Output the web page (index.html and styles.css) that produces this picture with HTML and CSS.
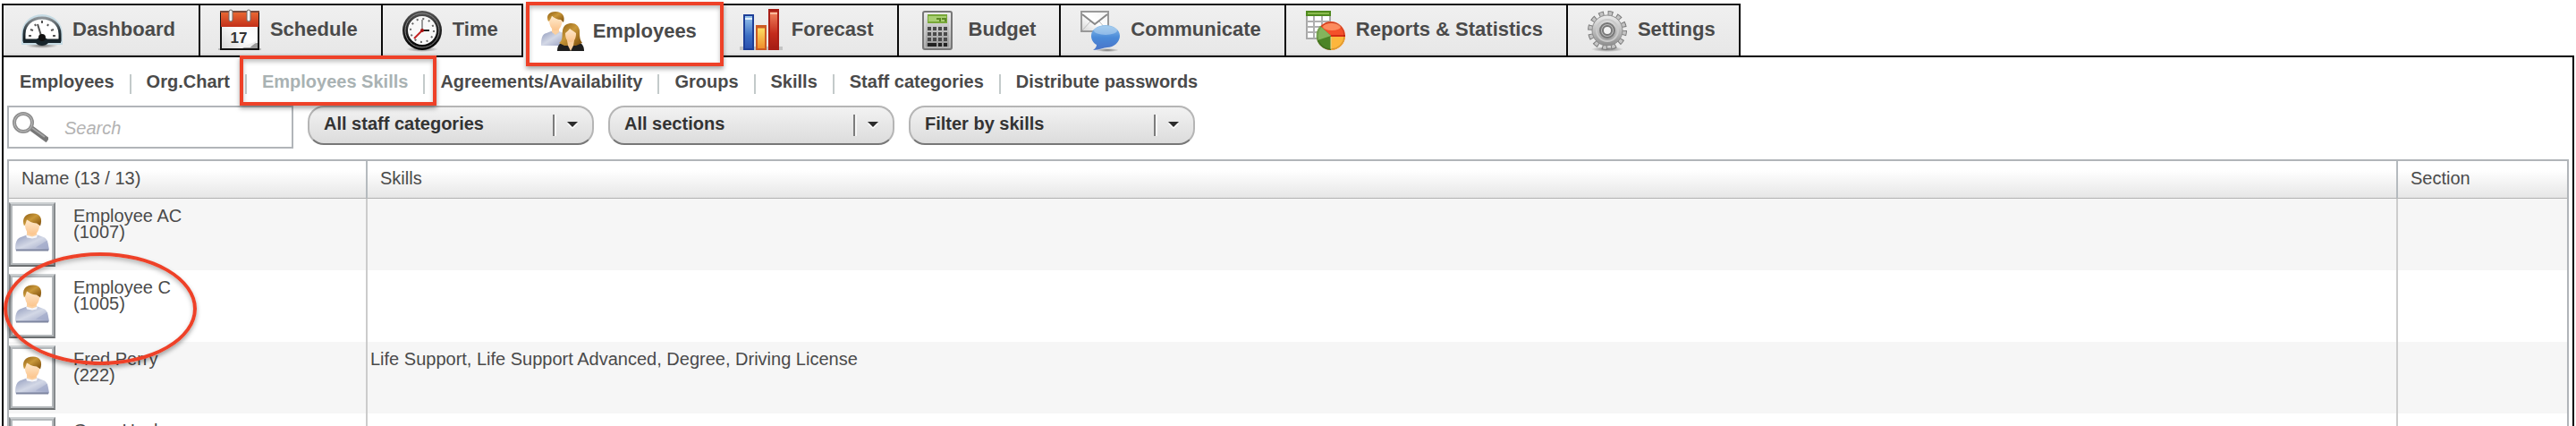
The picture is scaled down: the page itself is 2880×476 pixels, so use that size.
FILE: index.html
```
<!DOCTYPE html>
<html lang="en">
<head>
<meta charset="UTF-8">
<meta name="viewport" content="width=device-width, initial-scale=1.0">
<title>Employees Skills</title>
<link rel="stylesheet" href="styles.css">
</head>
<body>

<!-- shared gradients and the avatar -->
<svg class="defs" width="0" height="0" aria-hidden="true">
  <defs>
    <linearGradient id="gHair" x1="0" y1="0" x2="1" y2="1">
      <stop offset="0" stop-color="#8a5a10"/><stop offset=".45" stop-color="#c9983a"/><stop offset="1" stop-color="#7a4a08"/>
    </linearGradient>
    <linearGradient id="gSkin" x1="0" y1="0" x2="0" y2="1">
      <stop offset="0" stop-color="#ffe9cc"/><stop offset="1" stop-color="#fbc48c"/>
    </linearGradient>
    <linearGradient id="gShirt" x1="0" y1="0" x2="1" y2="1">
      <stop offset="0" stop-color="#8f99bb"/><stop offset=".5" stop-color="#d3d8e6"/><stop offset="1" stop-color="#9aa2c4"/>
    </linearGradient>
    <linearGradient id="gBlue" x1="0" y1="0" x2="0" y2="1">
      <stop offset="0" stop-color="#9cc9ee"/><stop offset=".6" stop-color="#3c6fc4"/><stop offset="1" stop-color="#2a4fae"/>
    </linearGradient>
    <linearGradient id="gBubble" x1="0" y1="0" x2="0" y2="1">
      <stop offset="0" stop-color="#8ec0ea"/><stop offset=".5" stop-color="#4a8ad8"/><stop offset="1" stop-color="#4a74c8"/>
    </linearGradient>
    <linearGradient id="gOrange" x1="0" y1="0" x2="0" y2="1">
      <stop offset="0" stop-color="#ffe768"/><stop offset="1" stop-color="#ee8a2a"/>
    </linearGradient>
    <linearGradient id="gRed" x1="0" y1="0" x2="0" y2="1">
      <stop offset="0" stop-color="#f58a62"/><stop offset=".6" stop-color="#c42c1c"/><stop offset="1" stop-color="#a41c14"/>
    </linearGradient>
    <linearGradient id="gCal" x1="0" y1="0" x2="0" y2="1">
      <stop offset="0" stop-color="#ea6a34"/><stop offset="1" stop-color="#c2301a"/>
    </linearGradient>
    <linearGradient id="gPaper" x1="0" y1="1" x2="1" y2="0">
      <stop offset="0" stop-color="#d4d4d4"/><stop offset=".5" stop-color="#fff"/><stop offset="1" stop-color="#f2f2f2"/>
    </linearGradient>
    <linearGradient id="gMetal" x1="0" y1="0" x2="0" y2="1">
      <stop offset="0" stop-color="#ededed"/><stop offset="1" stop-color="#8e8e8e"/>
    </linearGradient>
    <linearGradient id="gRim" x1="0" y1="0" x2="0" y2="1">
      <stop offset="0" stop-color="#8c9296"/><stop offset=".6" stop-color="#27343b"/><stop offset="1" stop-color="#10181c"/>
    </linearGradient>
    <linearGradient id="gClock" x1="0" y1="0" x2="0" y2="1">
      <stop offset="0" stop-color="#555"/><stop offset=".5" stop-color="#222"/><stop offset="1" stop-color="#000"/>
    </linearGradient>
    <radialGradient id="gShade">
      <stop offset="0" stop-color="#000" stop-opacity=".5"/><stop offset="1" stop-color="#000" stop-opacity="0"/>
    </radialGradient>
    <symbol id="person" viewBox="0 0 38 43">
      <path d="M0 41C0 34 1 29 5 27l8-3h12l8 3c3 2 4 7 5 14z" fill="url(#gShirt)"/>
      <path d="M1 41h36" stroke="#7e86a0" stroke-width="2"/>
      <path d="M23 38l13-8 1 9z" fill="#a3abca" opacity=".7"/>
      <path d="M13 19h11v5l-5 4-6-4z" fill="#fbd0a0"/>
      <path d="M12 24l7 2 6-2-1 3-5 1-6-1z" fill="#f6f7fb"/>
      <path d="M11 7h16c1 7 0 16-8 17-7-1-9-9-8-17z" fill="url(#gSkin)"/>
      <path d="M10 14C7 6 11 0 20 0c8 0 11 6 8 14-2-2-3-2-4-3-5 0-9-3-11-4-1 2-1 5-3 7z" fill="url(#gHair)"/>
    </symbol>
  </defs>
</svg>

<div class="app">
  <nav class="tabs">
    <a class="tab" href="#">
      <svg class="icon" viewBox="0 0 48 48" aria-hidden="true">
        <ellipse cx="24" cy="41" rx="18" ry="3" fill="url(#gShade)"/>
        <path d="M3 38V29C3 17 12 8 24 8s21 9 21 21v9z" fill="#fff" stroke="#c6dbe4" stroke-width="4"/>
        <path d="M4 35V28C4 17 13 10 24 10s20 7 20 18v7z" fill="#fff" stroke="url(#gRim)" stroke-width="3"/>
        <path d="M3 34h15c2-3 10-3 12 0h15v4H31c-3 4-11 4-14 0H3z" fill="#17242b"/>
        <path d="M9 30h3M36 30h3M11 23l3 1M34 24l3-1M16 17l1 2M31 17l-1 2M24 13v3" stroke="#555" stroke-width="2"/>
        <path d="M19 17l5 16" stroke="#555" stroke-width="2"/>
        <circle cx="24" cy="32" r="4" fill="#111"/>
      </svg>
      <span class="tab-label">Dashboard</span>
    </a>
    <a class="tab" href="#">
      <svg class="icon" viewBox="0 0 48 48" aria-hidden="true">
        <path d="M0 45h48" stroke="#bbb" stroke-width="2"/>
        <rect x="3" y="3" width="42" height="42" fill="url(#gPaper)" stroke="#111" stroke-width="2"/>
        <rect x="3" y="3" width="42" height="17" fill="url(#gCal)"/>
        <path d="M2 3h44" stroke="#7a4a3c" stroke-width="2"/>
        <path d="M27 44c5-3 10-6 17-6v6z" fill="#9a9a9a"/>
        <path d="M28 43c6-5 10-4 16-8-2 4-6 5-8 8z" fill="#eee"/>
        <rect x="12" y="1" width="4" height="13" rx="2" fill="#f4f4f4" stroke="#6c6c6c"/>
        <rect x="32" y="1" width="4" height="13" rx="2" fill="#f4f4f4" stroke="#6c6c6c"/>
        <text class="cal-day" x="23" y="38" text-anchor="middle">17</text>
      </svg>
      <span class="tab-label">Schedule</span>
    </a>
    <a class="tab" href="#">
      <svg class="icon" viewBox="0 0 48 48" aria-hidden="true">
        <ellipse cx="24" cy="45" rx="18" ry="3" fill="url(#gShade)"/>
        <circle cx="24" cy="24" r="22" fill="url(#gClock)"/>
        <circle cx="24" cy="24" r="19" fill="none" stroke="#8a8a8a"/>
        <circle cx="24" cy="24" r="16" fill="#f8f8f8"/>
        <circle cx="24" cy="24" r="13" fill="none" stroke="#666" stroke-width="2" stroke-dasharray="2 4.8"/>
        <path d="M24 12v12" stroke="#999" stroke-width="2"/>
        <path d="M24 24h8" stroke="#222" stroke-width="2"/>
        <path d="M24 24l-9 9" stroke="#c22222" stroke-width="2"/>
        <circle cx="24" cy="24" r="2" fill="#a11"/>
      </svg>
      <span class="tab-label">Time</span>
    </a>
    <a class="tab active" href="#" aria-current="page">
      <svg class="icon" viewBox="0 0 48 48" aria-hidden="true">
        <path d="M0 39c0-8 1-13 6-14l5-2h9l5 2v14z" fill="url(#gShirt)"/>
        <path d="M12 18h8v6l-4 3-4-3z" fill="#fbd0a0"/>
        <path d="M9 7h15c0 7-2 15-8 15-5 0-8-8-7-15z" fill="url(#gSkin)"/>
        <path d="M8 12C5 5 9 1 16 1c8 0 11 5 9 12l-3-3c-4 0-7-2-10-4-1 2-2 5-4 6z" fill="url(#gHair)"/>
        <path d="M18 45c0-5 2-9 6-9h18c4 0 6 4 6 9z" fill="#1e1e1e"/>
        <path d="M20 36c5-3 3-9 4-14 1-6 5-8 10-8s8 3 9 8c0 6 0 10 3 14l-7 3H26z" fill="url(#gHair)"/>
        <path d="M29 33h8l-1 6-3 6-3-6z" fill="#fbd0a0"/>
        <path d="M27 25c2-2 4-3 5-5 2 2 5 3 7 5 0 6-2 10-6 10s-6-4-6-10z" fill="url(#gSkin)"/>
      </svg>
      <span class="tab-label">Employees</span>
    </a>
    <a class="tab" href="#">
      <svg class="icon" viewBox="0 0 48 48" aria-hidden="true">
        <path d="M0 44h48" stroke="#c4c4c4" stroke-width="4"/>
        <rect x="5" y="7" width="10" height="38" fill="url(#gBlue)" stroke="#1e3f98" stroke-width="2"/>
        <path d="M4 7h12" stroke="#1e3f98" stroke-width="2"/>
        <path d="M6 11h8" stroke="#e2f0fb" stroke-width="2"/>
        <rect x="19" y="19" width="10" height="26" fill="url(#gOrange)" stroke="#cc5a22" stroke-width="2"/>
        <path d="M18 20h12" stroke="#cc5a22" stroke-width="3"/>
        <rect x="33" y="1" width="10" height="44" fill="url(#gRed)" stroke="#a81e16" stroke-width="2"/>
        <path d="M32 2h12" stroke="#a81e16" stroke-width="3"/>
        <path d="M34 5h8" stroke="#ffb89a" stroke-width="2"/>
      </svg>
      <span class="tab-label">Forecast</span>
    </a>
    <a class="tab" href="#">
      <svg class="icon" viewBox="0 0 48 48" aria-hidden="true">
        <rect x="7" y="3" width="32" height="42" rx="2" fill="url(#gMetal)" stroke="#777" stroke-width="2"/>
        <rect x="9" y="5" width="28" height="38" fill="none" stroke="#f4f4f4" opacity=".6"/>
        <rect x="12" y="6" width="22" height="10" fill="#78a838"/>
        <rect x="13" y="8" width="20" height="6" fill="#a9cf72"/>
        <path d="M22 11h4v3M28 11h4v3" stroke="#5c8826" stroke-width="2" fill="none"/>
        <path d="M12 22h22M12 28h22M12 34h22" stroke="#4a4a4a" stroke-width="4" stroke-dasharray="4 2"/>
        <path d="M12 40h10M24 40h4M30 40h4" stroke="#222" stroke-width="4"/>
      </svg>
      <span class="tab-label">Budget</span>
    </a>
    <a class="tab" href="#">
      <svg class="icon" viewBox="0 0 48 48" aria-hidden="true">
        <rect x="3" y="3" width="30" height="22" fill="url(#gPaper)" stroke="#999" stroke-width="2"/>
        <path d="M4 24l9-10M32 24l-9-10" stroke="#bbb"/>
        <path d="M4 6l14 11L32 6" fill="none" stroke="#888" stroke-width="2"/>
        <ellipse cx="32" cy="46" rx="13" ry="2" fill="url(#gShade)"/>
        <path d="M30 18c9 0 16 5 16 12s-7 13-14 13c-4 0-9 3-16 3 3-2 4-4 4-6-4-2-6-6-6-10 0-7 7-12 16-12z" fill="url(#gBubble)"/>
        <ellipse cx="30" cy="24" rx="13" ry="5" fill="#c3def4" opacity=".5"/>
      </svg>
      <span class="tab-label">Communicate</span>
    </a>
    <a class="tab" href="#">
      <svg class="icon" viewBox="0 0 48 48" aria-hidden="true">
        <rect x="3" y="3" width="26" height="30" fill="#fff" stroke="#a8a8a8" stroke-width="2"/>
        <path d="M3 14h26M3 20h26M3 26h26M11 8v25M20 8v25" stroke="#b0b0b0" stroke-width="2"/>
        <rect x="2" y="2" width="28" height="6" fill="#4f8a1e"/>
        <path d="M4 5h24" stroke="#8cbc50" stroke-width="2"/>
        <circle cx="30" cy="30" r="16" fill="#f4502a"/>
        <path d="M30 30H46A16 16 0 0 1 30 46z" fill="#fdb63c"/>
        <path d="M30 30V46A16 16 0 0 1 18 19z" fill="#4c8426"/>
        <path d="M30 30L18 19A16 16 0 0 0 15 35z" fill="#84b45c"/>
        <ellipse cx="31" cy="20" rx="10" ry="4" fill="#ff9a6c" opacity=".8"/>
        <path d="M30 30h16" stroke="#d42a14" stroke-width="2"/>
        <path d="M30 31v14" stroke="#e8d48a" stroke-width="1"/>
        <circle cx="30" cy="30" r="15" fill="none" stroke="#000" opacity=".2"/>
      </svg>
      <span class="tab-label">Reports &amp; Statistics</span>
    </a>
    <a class="tab" href="#">
      <svg class="icon" viewBox="0 0 48 48" aria-hidden="true">
        <ellipse cx="24" cy="45" rx="18" ry="3" fill="url(#gShade)"/>
        <circle cx="24" cy="24" r="19" fill="none" stroke="#7c7c7c" stroke-width="6" stroke-dasharray="5.6 4.348"/>
        <circle cx="24" cy="24" r="19" fill="none" stroke="#c4c4c4" stroke-width="4" stroke-dasharray="3.6 6.348" stroke-dashoffset="-1"/>
        <circle cx="24" cy="24" r="17" fill="url(#gMetal)" stroke="#8c8c8c"/>
        <circle cx="24" cy="24" r="12" fill="none" stroke="#c9c9c9" stroke-width="2"/>
        <circle cx="24" cy="24" r="8" fill="#bdbdbd" stroke="#777" stroke-width="2"/>
        <circle cx="24" cy="24" r="5" fill="#f2f2f2" stroke="#777" stroke-width="2"/>
      </svg>
      <span class="tab-label">Settings</span>
    </a>
  </nav>

  <main class="panel">
    <ul class="subnav">
      <li><a href="#">Employees</a></li>
      <li><a href="#">Org.Chart</a></li>
      <li class="current"><a href="#" aria-current="page">Employees Skills</a></li>
      <li><a href="#">Agreements/Availability</a></li>
      <li><a href="#">Groups</a></li>
      <li><a href="#">Skills</a></li>
      <li><a href="#">Staff categories</a></li>
      <li><a href="#">Distribute passwords</a></li>
    </ul>

    <form class="filters">
      <label class="search">
        <svg class="search-icon" viewBox="0 0 40 34" aria-hidden="true">
          <path d="M22 19l15 11" stroke="#777" stroke-width="6" stroke-linecap="square"/>
          <path d="M22 18l14 10" stroke="#a4a4a4" stroke-width="2"/>
          <circle cx="12" cy="12" r="10" fill="#fff" stroke="#8e8e8e" stroke-width="4"/>
          <circle cx="12" cy="12" r="10" fill="none" stroke="#bcbcbc"/>
        </svg>
        <input type="text" placeholder="Search" aria-label="Search">
      </label>
      <div class="dropdown">
        <select aria-label="Staff category"><option>All staff categories</option></select>
      </div>
      <div class="dropdown">
        <select aria-label="Section"><option>All sections</option></select>
      </div>
      <div class="dropdown">
        <select aria-label="Skills"><option>Filter by skills</option></select>
      </div>
    </form>

    <table class="grid">
      <thead>
        <tr>
          <th class="col-name">Name (13 / 13)</th>
          <th>Skills</th>
          <th class="col-section">Section</th>
        </tr>
      </thead>
      <tbody>
        <tr>
          <td>
            <div class="employee">
              <span class="avatar"><svg aria-hidden="true"><use href="#person"/></svg></span>
              <span class="name">Employee AC<br>(1007)</span>
            </div>
          </td>
          <td></td>
          <td></td>
        </tr>
        <tr>
          <td>
            <div class="employee circled">
              <span class="avatar"><svg aria-hidden="true"><use href="#person"/></svg></span>
              <span class="name">Employee C<br>(1005)</span>
            </div>
          </td>
          <td></td>
          <td></td>
        </tr>
        <tr>
          <td>
            <div class="employee">
              <span class="avatar"><svg aria-hidden="true"><use href="#person"/></svg></span>
              <span class="name">Fred Perry<br>(222)</span>
            </div>
          </td>
          <td>Life Support, Life Support Advanced, Degree, Driving License</td>
          <td></td>
        </tr>
        <tr>
          <td>
            <div class="employee">
              <span class="avatar"><svg aria-hidden="true"><use href="#person"/></svg></span>
              <span class="name">Gene Hackman</span>
            </div>
          </td>
          <td></td>
          <td></td>
        </tr>
      </tbody>
    </table>
  </main>
</div>

</body>
</html>
```
FILE: styles.css
```
*,
*::before,
*::after {
  box-sizing: border-box;
}
body {
  margin: 0;
  background-color: #fff;
  color: #4a4a4a;
  font-family: "Liberation Sans", Arial, sans-serif;
  font-size: 20px;
}
a {
  color: inherit;
  text-decoration: none;
}
.defs {
  position: absolute;
}
.app {
  display: flex;
  flex-direction: column;
  height: 100vh;
  padding: 4px 2px 0;
  overflow: hidden;
}

/* main tabs */
.tabs {
  position: relative;
  z-index: 1;
  display: flex;
  height: 58px;
  border-left: 2px solid #0a0a0a;
}
.tab {
  position: relative;
  display: flex;
  align-items: center;
  gap: 10px;
  padding: 0 26px 0 19px;
  border-top: 2px solid #151515;
  border-right: 2px solid #0a0a0a;
  background: linear-gradient(#f0f0f0, #e7e7e7);
  box-shadow: inset 0 -2px 0 #dadada;
  font-size: 22px;
  font-weight: bold;
  white-space: nowrap;
}
.tab + .tab {
  padding-left: 20px;
}
.tab-label {
  padding-bottom: 3px;
}
.icon {
  flex: none;
  width: 48px;
  height: 48px;
}
.cal-day {
  font-size: 17px;
  font-weight: bold;
  fill: #333;
}
.tab.active {
  height: 60px;
  padding-top: 2px;
  border-top-color: #fff;
  background: #fff;
  box-shadow: none;
}

/* red markers */
.tab.active::after,
.subnav .current::after,
.circled::after {
  content: "";
  position: absolute;
  z-index: 2;
  border: 4px solid #ee4128;
  box-shadow: 0 3px 5px rgba(0, 0, 0, 0.35), inset 0 3px 5px rgba(0, 0, 0, 0.25);
  pointer-events: none;
}
.tab.active::after {
  inset: -4px -4px -10px 3px;
}
.subnav .current::after {
  inset: -21px -15px -13px -8px;
}
.circled::after {
  width: 216px;
  height: 126px;
  top: -20px;
  left: -6px;
  border-radius: 50%;
}

.panel {
  flex: 1;
  min-height: 0;
  border: 2px solid #000;
  border-bottom: none;
}

/* sub navigation */
.subnav {
  display: flex;
  margin: 0;
  padding: 19px 1px 13px;
  list-style: none;
  font-weight: bold;
}
.subnav li {
  position: relative;
  height: 22px;
  padding: 0 17px;
  border-right: 2px solid #c3caca;
  line-height: 16px;
  white-space: nowrap;
}
.subnav li:last-child {
  border-right: none;
}
.subnav .current {
  color: #a9b2b3;
}

/* search and filters */
.filters {
  display: flex;
  align-items: flex-start;
  gap: 16px;
  margin: 0 4px 12px;
}
.search {
  display: flex;
  align-items: center;
  gap: 18px;
  width: 320px;
  height: 48px;
  padding: 0 4px;
  border: 2px solid #b1b5b9;
  background: #fff;
}
.search-icon {
  flex: none;
  width: 40px;
  height: 34px;
}
.search input {
  flex: 1;
  min-width: 0;
  padding: 2px 0 0;
  border: none;
  outline: none;
  background: none;
  color: #4a4a4a;
  font: 20px "Liberation Sans", Arial, sans-serif;
}
.search input::placeholder {
  color: #b3b3b3;
  font-style: italic;
}
.dropdown {
  position: relative;
  width: 320px;
}
.dropdown select {
  appearance: none;
  display: block;
  width: 100%;
  height: 44px;
  padding: 0 60px 4px 16px;
  border: 2px solid #b5b5b5;
  border-bottom-color: #777;
  border-radius: 18px;
  background: linear-gradient(#f2f2f2, #dcdcdc);
  color: #333;
  font: bold 20px "Liberation Sans", Arial, sans-serif;
}
.dropdown::before {
  content: "";
  position: absolute;
  top: 10px;
  right: 42px;
  width: 4px;
  height: 24px;
  border-left: 2px solid #7c7c7c;
  background: #f6f6f6;
  pointer-events: none;
}
.dropdown::after {
  content: "";
  position: absolute;
  top: 18px;
  right: 18px;
  border: 6px solid transparent;
  border-top-color: #2c2c2c;
  border-bottom: none;
  filter: drop-shadow(0 2px 0 #fff);
  pointer-events: none;
}

/* employee list */
.grid {
  width: calc(100% - 8px);
  margin: 0 4px;
  border: 2px solid #b1b5b9;
  border-spacing: 0;
  table-layout: fixed;
}
.grid th {
  height: 42px;
  padding: 0 14px 3px;
  border-right: 2px solid #b5babe;
  border-bottom: 1px solid #b0b0b0;
  background: linear-gradient(#fff 25%, #e6e6e6);
  font-weight: normal;
  text-align: left;
}
.grid .col-name {
  width: 401px;
}
.grid .col-section {
  width: 189px;
}
.grid td {
  height: 80px;
  padding: 10px 3px 0;
  border-right: 2px solid #ccc;
  line-height: 18px;
  vertical-align: top;
}
.grid td:first-child {
  padding: 0;
}
.grid th:last-child,
.grid td:last-child {
  border-right: none;
}
.grid tbody tr:nth-child(odd) {
  background: #f6f6f6;
}
.employee {
  position: relative;
  display: flex;
  gap: 20px;
}
.avatar {
  width: 52px;
  height: 72px;
  margin: 4px 0;
  padding: 10px 5px;
  border: 2px solid;
  border-color: #ccd0d2 #868a8d #6c6f71 #868a8d;
  background: #fff;
  box-shadow: inset 0 0 0 2px #b4b8bb;
}
.avatar svg {
  display: block;
  width: 38px;
  height: 44px;
}
.name {
  padding-top: 10px;
}
```
